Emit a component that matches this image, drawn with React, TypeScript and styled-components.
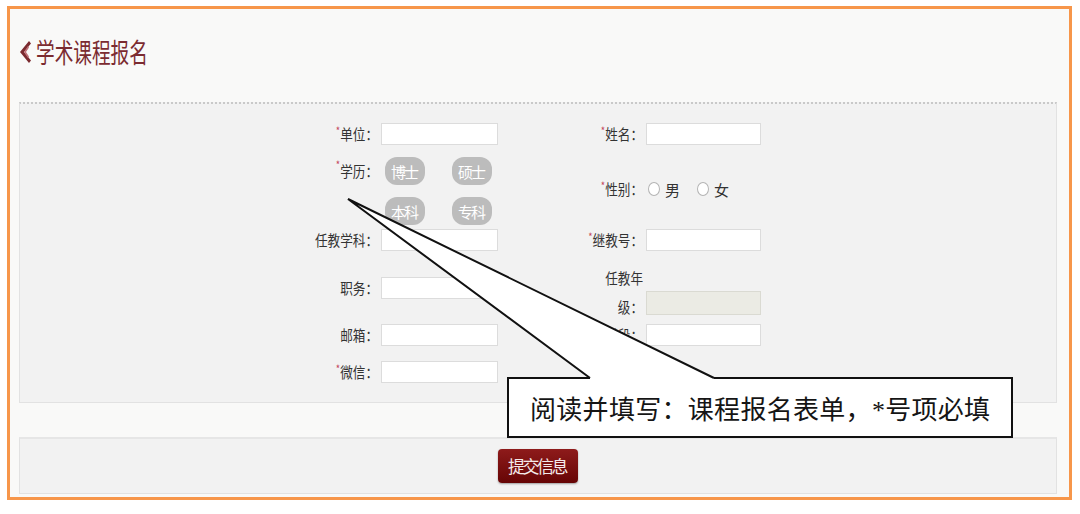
import React from "react";
import styled, { createGlobalStyle } from "styled-components";

const Global = createGlobalStyle`
  html, body { margin: 0; padding: 0; background: #ffffff; }
  body { font-family: "Noto Sans CJK SC", "Noto Sans", sans-serif; }
  * { box-sizing: border-box; }
`;

const Page = styled.div`
  position: relative;
  width: 1080px;
  height: 514px;
  padding: 6px 0 0 7px;
`;

const Frame = styled.div`
  width: 1065px;
  height: 494px;
  border: 3px solid #f7964a;
  background: #f9f9f8;
  display: flex;
  flex-direction: column;
`;

const TitleBar = styled.div`
  height: 93px;
  padding: 0 0 7px 10px;
  display: flex;
  align-items: center;
  gap: 5px;
`;

const TitleText = styled.h1`
  margin: 0;
  font-size: 27px;
  font-weight: 400;
  color: #7b2b30;
  line-height: 30px;
  white-space: nowrap;
  transform: scaleX(0.69);
  transform-origin: left center;
`;

const Panel = styled.div`
  margin-left: 9px;
  width: 1038px;
  height: 301px;
  background: #f2f2f2;
  border: 1px solid #e2e2e2;
  border-top: 2px dotted #c9c9c9;
  display: flex;
  padding: 19px 0 0 278px;
`;

const Column = styled.div<{ $width?: number }>`
  display: flex;
  flex-direction: column;
  width: ${(p) => (p.$width ? `${p.$width}px` : "auto")};
`;

const Row = styled.div<{ $mt: number; $top?: boolean }>`
  display: flex;
  align-items: ${(p) => (p.$top ? "flex-start" : "center")};
  margin-top: ${(p) => p.$mt}px;
`;

const SCALE = 0.84;

const Label = styled.label<{ $w: number }>`
  width: ${(p) => p.$w}px;
  margin-right: 3px;
  display: flex;
  justify-content: flex-end;
  flex: none;
`;

const LabelText = styled.span<{ $w: number; $lh?: number }>`
  flex: none;
  width: ${(p) => Math.round(p.$w / SCALE)}px;
  text-align: right;
  font-size: 15px;
  color: #333333;
  line-height: ${(p) => p.$lh ?? 22}px;
  transform: scaleX(${SCALE});
  transform-origin: right center;
`;

const Star = styled.span`
  color: #c4475a;
  font-size: 11px;
  vertical-align: top;
  line-height: 15px;
`;

const Input = styled.input<{ $w: number; $mt?: number; $h?: number }>`
  width: ${(p) => p.$w}px;
  height: ${(p) => p.$h ?? 22}px;
  margin: ${(p) => p.$mt ?? 0}px 0 0 0;
  border: 1px solid #dcdcdc;
  background: #ffffff;
  padding: 0 4px;
  outline: none;
  &:disabled { background: #ebebe4; border-color: #dadad2; }
`;

const PillGrid = styled.div`
  display: grid;
  grid-template-columns: 40px 40px;
  column-gap: 27px;
  row-gap: 12px;
  margin-left: 4px;
`;

const Pill = styled.span`
  height: 28px;
  border-radius: 12px;
  background: #bcbcbc;
  color: #ffffff;
  font-size: 15px;
  letter-spacing: -2px;
  display: flex;
  align-items: center;
  justify-content: center;
  padding-right: 2px;
`;

const RadioGroup = styled.div`
  display: flex;
  align-items: center;
  margin-left: 2px;
  height: 22px;
`;

const RadioItem = styled.span`
  display: flex;
  align-items: center;
  gap: 5px;
  margin-right: 17px;
  font-size: 15px;
  color: #333;
`;

const RadioDot = styled.span`
  width: 12px;
  height: 14px;
  border-radius: 50%;
  border: 1px solid #b4b4b4;
  background: #fff;
`;

const Spacer = styled.div<{ $h: number }>`
  height: ${(p) => p.$h}px;
  flex: none;
`;

const Footer = styled.div`
  margin-left: 9px;
  width: 1038px;
  height: 57px;
  background: #f2f2f2;
  border: 1px solid #e2e2e2;
  border-top: 2px solid #e6e6e6;
  display: flex;
  align-items: center;
  justify-content: center;
`;

const SubmitButton = styled.button`
  width: 80px;
  height: 34px;
  border: none;
  border-radius: 4px;
  background: linear-gradient(#8e1b1b, #660505);
  color: #f4eaea;
  font-family: "Noto Sans CJK SC", sans-serif;
  font-size: 17px;
  letter-spacing: -2.5px;
  padding: 0 2px 0 0;
  box-shadow: 0 1px 2px rgba(0, 0, 0, 0.35);
  margin-top: -1px;
`;

const CalloutBox = styled.div`
  position: absolute;
  left: 507px;
  top: 377px;
  width: 506px;
  height: 61px;
  background: #ffffff;
  border: 2px solid #111;
  display: flex;
  align-items: center;
  padding-left: 21px;
  font-family: "Liberation Serif", "Noto Sans CJK SC", serif;
  font-size: 26px;
  letter-spacing: 0.3px;
  color: #151515;
  white-space: nowrap;
`;

const Pointer = styled.svg`
  position: absolute;
  left: 340px;
  top: 190px;
  overflow: visible;
`;

const BackArrow = () => (
  <svg width="11" height="22" viewBox="0 0 11 22">
    <polygon points="9,0 0,11 9,22 11,19.5 4,11 11,2.5" fill="#7b2b30" />
    <polygon points="8,5 4,11 8,17 9,15.5 6,11 9,6.5" fill="#c07078" />
  </svg>
);

const Req = ({ children }: { children: React.ReactNode }) => (
  <>
    <Star>*</Star>
    {children}
  </>
);

const FieldLabel = ({ w, lh, children }: { w: number; lh?: number; children: React.ReactNode }) => (
  <Label $w={w}>
    <LabelText $w={w} $lh={lh}>{children}</LabelText>
  </Label>
);

export default function App() {
  return (
    <Page>
      <Global />
      <Frame>
        <TitleBar>
          <BackArrow />
          <TitleText>学术课程报名</TitleText>
        </TitleBar>
        <Panel>
          <Column $width={285}>
            <Row $mt={0}>
              <FieldLabel w={80}><Req>单位：</Req></FieldLabel>
              <Input $w={117} />
            </Row>
            <Row $mt={12} $top>
              <FieldLabel w={80} lh={28}><Req>学历：</Req></FieldLabel>
              <PillGrid>
                <Pill>博士</Pill>
                <Pill>硕士</Pill>
                <Pill>本科</Pill>
                <Pill>专科</Pill>
              </PillGrid>
            </Row>
            <Row $mt={4}>
              <FieldLabel w={80}>任教学科：</FieldLabel>
              <Input $w={117} />
            </Row>
            <Row $mt={26}>
              <FieldLabel w={80}>职务：</FieldLabel>
              <Input $w={117} />
            </Row>
            <Row $mt={25}>
              <FieldLabel w={80}>邮箱：</FieldLabel>
              <Input $w={117} />
            </Row>
            <Row $mt={15}>
              <FieldLabel w={80}><Req>微信：</Req></FieldLabel>
              <Input $w={117} />
            </Row>
          </Column>
          <Column>
            <Row $mt={0}>
              <FieldLabel w={60}><Req>姓名：</Req></FieldLabel>
              <Input $w={115} />
            </Row>
            <Row $mt={33}>
              <FieldLabel w={60}><Req>性别：</Req></FieldLabel>
              <RadioGroup>
                <RadioItem><RadioDot />男</RadioItem>
                <RadioItem><RadioDot />女</RadioItem>
              </RadioGroup>
            </Row>
            <Row $mt={29}>
              <FieldLabel w={60}><Req>继教号：</Req></FieldLabel>
              <Input $w={115} />
            </Row>
            <Row $mt={12} $top>
              <FieldLabel w={60} lh={29}>任教年级：</FieldLabel>
              <Input $w={115} $h={24} $mt={28} disabled />
            </Row>
            <Row $mt={3}>
              <FieldLabel w={60}>学段：</FieldLabel>
              <Input $w={115} />
            </Row>
          </Column>
        </Panel>
        <Spacer $h={34} />
        <Footer>
          <SubmitButton>提交信息</SubmitButton>
        </Footer>
      </Frame>
      <CalloutBox>阅读并填写：课程报名表单，*号项必填</CalloutBox>
      <Pointer width="380" height="194" viewBox="0 0 380 194">
        <polygon points="8,9 250,188 250,191 374,191 374,188" fill="#ffffff" />
        <polyline points="250,188 8,9 374,188" fill="none" stroke="#111" strokeWidth="2" />
      </Pointer>
    </Page>
  );
}
